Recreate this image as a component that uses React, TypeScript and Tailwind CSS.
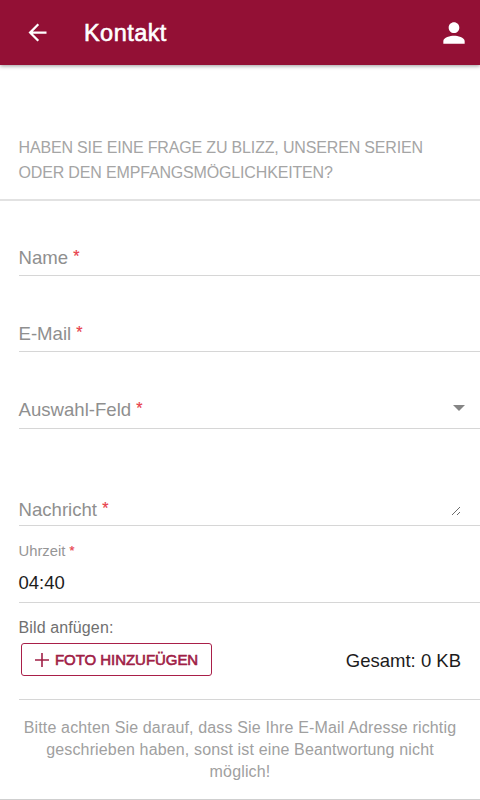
import type { ReactNode } from 'react';
import { MdArrowBack, MdPerson } from 'react-icons/md';

interface FieldProps {
  label: string;
  className: string;
  children?: ReactNode;
}

function Required() {
  return (
    <span className="ml-[0.32em] inline-block align-[0.1em] text-[0.86em] leading-none text-[#e8404a] [-webkit-text-stroke:0.2px_#e8404a]">
      *
    </span>
  );
}

function Field({ label, className, children }: FieldProps) {
  return (
    <div className={`ml-[19px] flex items-end justify-between border-b border-[#d6d6d6] ${className}`}>
      <label className="-ml-[0.5px] whitespace-nowrap text-[18.6px] leading-6 text-[#8f8f8f]">
        {label}
        <Required />
      </label>
      {children}
    </div>
  );
}

export default function App() {
  return (
    <div className="flex h-[800px] w-[480px] flex-col overflow-hidden bg-white font-['Liberation_Sans',Arial,sans-serif]">
      <header className="flex h-[65px] shrink-0 items-center bg-[#931035] pr-3.5 pl-6 text-white shadow-[0_1px_4px_rgba(0,0,0,0.4)]">
        <MdArrowBack size={27} />
        <h1 className="ml-[33px] pt-[3px] text-[23.5px] tracking-[0.45px] [-webkit-text-stroke:0.6px_white]">Kontakt</h1>
        <MdPerson size={32} className="-mr-[3.5px] ml-auto" />
      </header>

      <div className="h-[136px] shrink-0 border-b-2 border-[#e2e2e2] pt-[71px] pl-[18.5px]">
        <p className="whitespace-nowrap text-[16px] leading-[24.5px] tracking-[-0.16px] text-[#a5a5a5]">
          HABEN SIE EINE FRAGE ZU BLIZZ, UNSEREN SERIEN
          <br />
          ODER DEN EMPFANGSMÖGLICHKEITEN?
        </p>
      </div>

      <Field label="Name" className="h-[75px] shrink-0 pb-[5px]" />
      <Field label="E-Mail" className="h-[76px] shrink-0 pb-[5px]" />
      <Field label="Auswahl-Feld" className="h-[77px] shrink-0 pb-[6px]">
        <svg width="12" height="6" viewBox="0 0 12 6" className="mr-[15px] mb-[11px]">
          <path d="M0 0h12L6 6z" fill="#858585" />
        </svg>
      </Field>
      <Field label="Nachricht" className="h-[97px] shrink-0 pb-[3px]">
        <svg width="10" height="10" viewBox="0 0 10 10" className="mr-[19px] mb-[6px]" stroke="#6b6b6b" strokeWidth="1">
          <path d="M1 9 9 1M6 9l3-3" />
        </svg>
      </Field>

      <div className="ml-[19px] h-[77px] shrink-0 border-b border-[#d6d6d6] pt-[15px]">
        <div className="-ml-[0.5px] text-[14.8px] leading-5 text-[#969696]">
          Uhrzeit
          <Required />
        </div>
        <div className="-ml-[0.5px] mt-[10px] text-[18.5px] leading-6 text-[#1c1c1c]">04:40</div>
      </div>

      <div className="ml-[19px] h-[97px] shrink-0 border-b border-[#d6d6d6] pt-[15px]">
        <div className="-ml-[0.5px] text-[16px] leading-5 tracking-[0.12px] text-[#707070]">Bild anfügen:</div>
        <div className="mt-[5px] flex items-center justify-between pr-[19px] pl-[2px]">
          <button className="flex h-[33px] w-[191px] items-center rounded-[3px] border border-[#a91f49] pl-[13px] text-[15px] text-[#a02046]">
            <svg width="14" height="14" viewBox="0 0 14 14" stroke="currentColor" strokeWidth="1.6">
              <path d="M7 0v14M0 7h14" />
            </svg>
            <span className="ml-[6px] pt-[2px] whitespace-nowrap tracking-[-0.05px] [-webkit-text-stroke:0.6px_#a02046]">FOTO HINZUFÜGEN</span>
          </button>
          <span className="pt-[3px] text-[18.5px] text-[#1c1c1c]">Gesamt: 0 KB</span>
        </div>
      </div>

      <div className="h-[100px] shrink-0 border-b border-[#cfcfcf] pt-[17px] text-center text-[16px] leading-[22px] tracking-[0.15px] text-[#a0a0a0]">
        Bitte achten Sie darauf, dass Sie Ihre E-Mail Adresse richtig
        <br />
        geschrieben haben, sonst ist eine Beantwortung nicht
        <br />
        möglich!
      </div>
    </div>
  );
}
